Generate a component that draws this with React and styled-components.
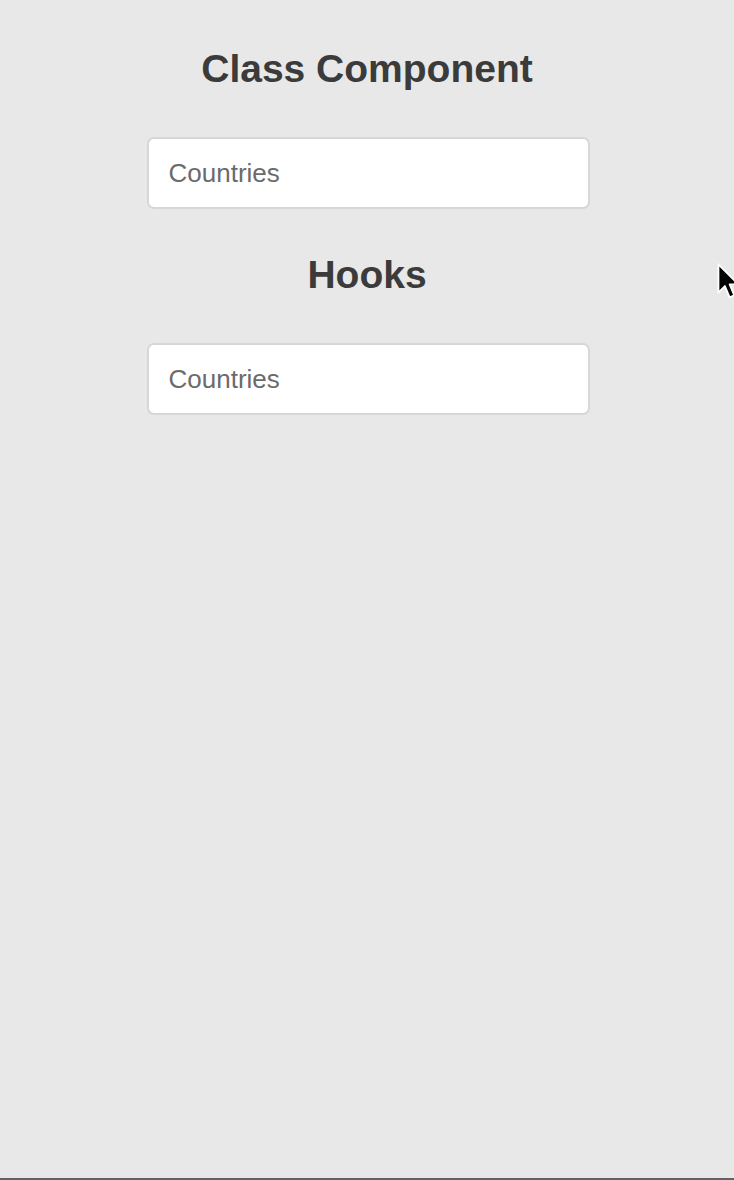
import React from 'react';
import styled, { createGlobalStyle } from 'styled-components';

const GlobalStyle = createGlobalStyle`
  html, body {
    margin: 0;
    padding: 0;
    background: #e8e8e8;
  }
  * { box-sizing: border-box; }
`;

const Page = styled.div`
  min-height: 100vh;
  position: relative;
  display: flex;
  flex-direction: column;
  align-items: center;
  padding-top: 47px;
  background: #e8e8e8;
  border-bottom: 2px solid #636363;
  font-family: "Liberation Sans", Arial, sans-serif;
`;

const Title = styled.h1`
  margin: ${p => (p.$first ? '0' : '44px')} 0 46px;
  font-size: 39px;
  line-height: 44px;
  font-weight: 700;
  color: #3b3b3b;
  text-align: center;
`;

const Input = styled.input`
  width: 443px;
  height: 72px;
  padding: 0 20px;
  margin-left: 2px;
  border: 2px solid #d7d7d7;
  border-radius: 7px;
  background: #fff;
  font-family: "Liberation Sans", Arial, sans-serif;
  font-size: 26px;
  color: #333;
  outline: none;
  &::placeholder {
    color: #6b6b6b;
  }
`;

const Pointer = styled.svg`
  position: absolute;
  left: 716px;
  top: 262px;
  width: 26px;
  height: 40px;
`;

const Cursor = () => (
  <Pointer viewBox="0 0 22 34">
    <path
      d="M2 2 L2 26 L7.5 20.5 L11.5 30 L15.5 28.3 L11.6 19 L19 19 Z"
      fill="#000"
      stroke="#fff"
      strokeWidth="1.6"
      strokeLinejoin="round"
    />
  </Pointer>
);

const App = () => {
  return (
    <Page>
      <GlobalStyle />
      <Title $first>Class Component</Title>
      <Input placeholder="Countries" />
      <Title>Hooks</Title>
      <Input placeholder="Countries" />
      <Cursor />
    </Page>
  );
};

export default App;
